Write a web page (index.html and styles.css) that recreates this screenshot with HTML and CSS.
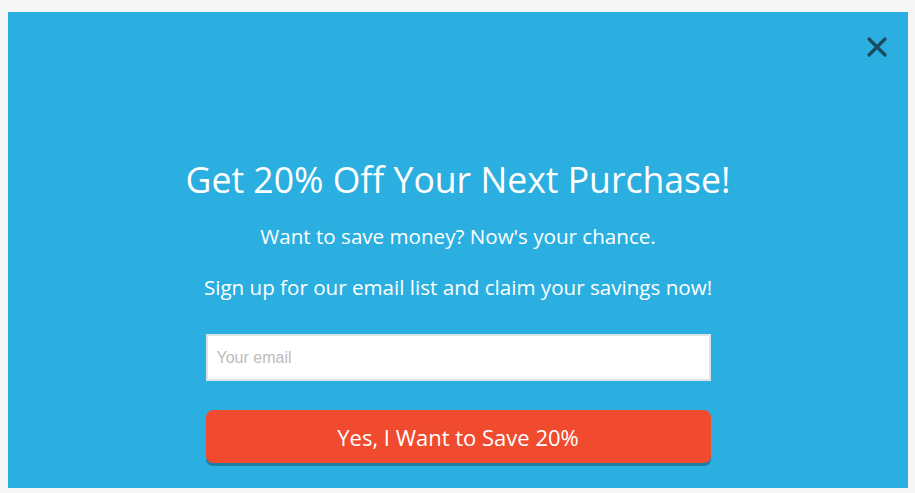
FILE: index.html
```html
<!DOCTYPE html>
<html lang="en">
<head>
    <meta charset="UTF-8">
    <meta name="viewport" content="width=device-width, initial-scale=1.0">
    <title>Get 20% Off</title>
    <link rel="stylesheet" href="styles.css">
</head>
<body>
    <div class="popup">
        <button class="close" aria-label="Close">
            <svg width="22" height="22" viewBox="0 0 22 22">
                <path d="M3 3 L19 19 M19 3 L3 19" stroke="#1c4a5f" stroke-width="3.2" stroke-linecap="round"/>
            </svg>
        </button>

        <h1>Get 20% Off Your Next Purchase!</h1>
        <p>Want to save money? Now's your chance.</p>
        <p>Sign up for our email list and claim your savings now!</p>

        <form class="signup" onsubmit="return false">
            <input type="email" placeholder="Your email">
            <button type="submit" class="cta">Yes, I Want to Save 20%</button>
        </form>
    </div>
</body>
</html>
```

FILE: styles.css
```css
body {
    margin: 0;
    padding: 12px 7px 5px 8px;
    background-color: #f7f7f7;
    font-family: "Open Sans", Arial, sans-serif;
}
.popup {
    position: relative;
    background-color: #2aafe0;
    height: 476px;
    box-sizing: border-box;
    padding-top: 145px;
    text-align: center;
    color: white;
}
.close {
    position: absolute;
    top: 24px;
    right: 20px;
    background: none;
    border: none;
    padding: 0;
    cursor: pointer;
}
h1 {
    font-size: 35.6px;
    font-weight: normal;
    line-height: 44px;
    margin: 0 0 21px;
}
p {
    font-size: 20.6px;
    line-height: 28px;
    margin: 0 0 23px;
}
.signup {
    width: 505px;
    margin: 33px auto 0;
}
.signup input {
    display: block;
    width: 100%;
    height: 47px;
    box-sizing: border-box;
    border: 2px solid #dde3e6;
    padding: 0 9px;
    font-family: Arial, "Liberation Sans", sans-serif;
    font-size: 16px;
    color: #333;
    outline: none;
}
.signup input::placeholder {
    color: #bbbbbb;
}
.cta {
    display: block;
    width: 100%;
    height: 53px;
    margin-top: 29px;
    border: none;
    border-radius: 7px;
    background-color: #f04b2f;
    box-shadow: 0 3px 0 #1f7ea4;
    color: white;
    font-family: "Open Sans", Arial, sans-serif;
    font-size: 22px;
    cursor: pointer;
}
```
